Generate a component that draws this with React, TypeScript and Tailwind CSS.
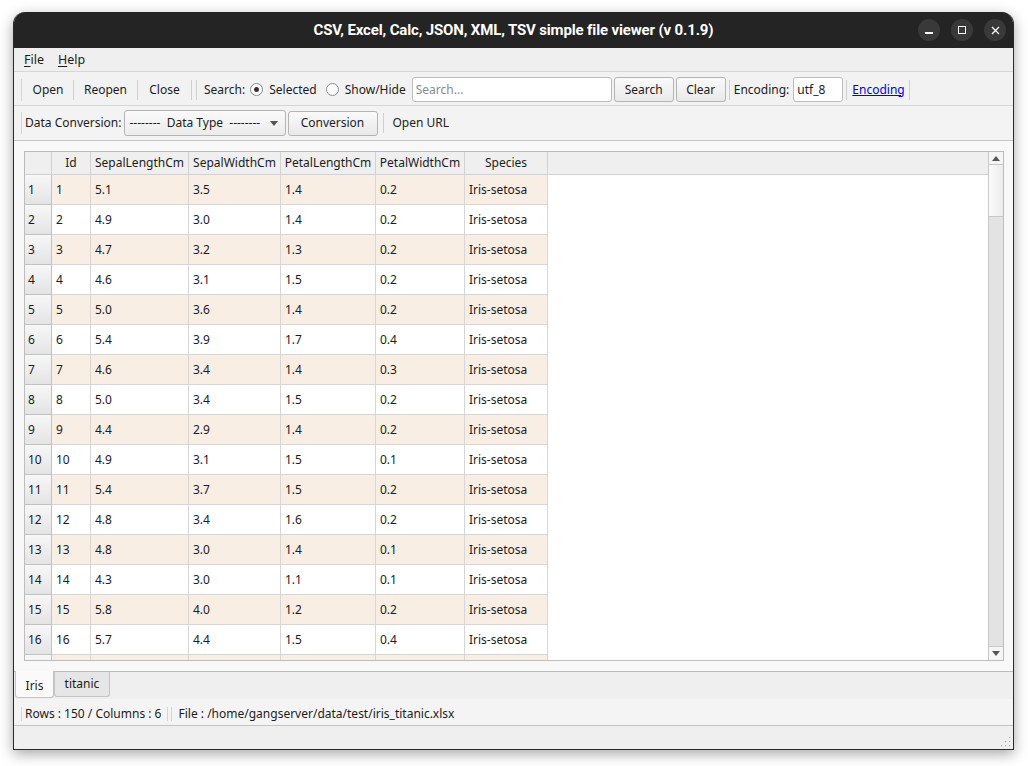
import React from 'react';

const rows: string[][] = [
  ['1', '5.1', '3.5', '1.4', '0.2'],
  ['2', '4.9', '3.0', '1.4', '0.2'],
  ['3', '4.7', '3.2', '1.3', '0.2'],
  ['4', '4.6', '3.1', '1.5', '0.2'],
  ['5', '5.0', '3.6', '1.4', '0.2'],
  ['6', '5.4', '3.9', '1.7', '0.4'],
  ['7', '4.6', '3.4', '1.4', '0.3'],
  ['8', '5.0', '3.4', '1.5', '0.2'],
  ['9', '4.4', '2.9', '1.4', '0.2'],
  ['10', '4.9', '3.1', '1.5', '0.1'],
  ['11', '5.4', '3.7', '1.5', '0.2'],
  ['12', '4.8', '3.4', '1.6', '0.2'],
  ['13', '4.8', '3.0', '1.4', '0.1'],
  ['14', '4.3', '3.0', '1.1', '0.1'],
  ['15', '5.8', '4.0', '1.2', '0.2'],
  ['16', '5.7', '4.4', '1.5', '0.4'],
  ['17', '5.4', '3.9', '1.3', '0.4'],
];

const columns = [
  { name: 'Id', w: 'w-[39px]' },
  { name: 'SepalLengthCm', w: 'w-[98px]' },
  { name: 'SepalWidthCm', w: 'w-[92px]' },
  { name: 'PetalLengthCm', w: 'w-[95px]' },
  { name: 'PetalWidthCm', w: 'w-[89px]' },
  { name: 'Species', w: 'w-[83px]' },
];

function Sep() {
  return <div className="h-[20px] w-px bg-[#cfcfcf] shrink-0" />;
}

function Handle() {
  return <div className="h-[22px] w-px bg-[#d4d4d4] shrink-0" />;
}

function PushButton({ label, w }: { label: string; w: string }) {
  return (
    <div
      className={`${w} h-[25px] shrink-0 flex items-center justify-center rounded-[3px] border border-[#b4b4b4] bg-gradient-to-b from-[#fafafa] to-[#e9e9e9]`}
    >
      {label}
    </div>
  );
}

function Radio({ checked }: { checked?: boolean }) {
  return (
    <div className="w-[13px] h-[13px] shrink-0 rounded-full border border-[#8a8a8a] bg-white flex items-center justify-center">
      {checked && <div className="w-[5px] h-[5px] rounded-full bg-[#333]" />}
    </div>
  );
}

export default function App() {
  return (
    <div
      className="w-[1028px] h-[766px] bg-white overflow-hidden pt-[12px] pl-[13px] text-[12px] text-[#1c1c1c]"
      style={{ fontFamily: '"Noto Sans", sans-serif' }}
    >
      <div className="w-[1001px] h-[738px] flex flex-col rounded-t-[12px] bg-[#efefef] border-x border-b border-[#2a2a2a] shadow-[0_4px_14px_rgba(0,0,0,0.35)] overflow-hidden">
        {/* Title bar */}
        <div className="h-[36px] shrink-0 bg-[#242424] relative flex items-center justify-center">
          <span
            className="text-white text-[15px] font-bold tracking-[-0.15px]"
            style={{ fontFamily: 'Roboto, "Noto Sans", sans-serif' }}
          >
            CSV, Excel, Calc, JSON, XML, TSV simple file viewer (v 0.1.9)
          </span>
          <div className="absolute right-[7px] top-[7px] flex gap-[11px]">
            <div className="w-[22px] h-[22px] rounded-full bg-[#393939] flex items-center justify-center">
              <div className="w-[8px] h-[1.5px] bg-white mt-[6px]" />
            </div>
            <div className="w-[22px] h-[22px] rounded-full bg-[#393939] flex items-center justify-center">
              <div className="w-[8px] h-[8px] border border-white" />
            </div>
            <div className="w-[22px] h-[22px] rounded-full bg-[#393939] flex items-center justify-center">
              <svg width="9" height="9" viewBox="0 0 9 9">
                <path d="M1 1L8 8M8 1L1 8" stroke="white" strokeWidth="1.3" />
              </svg>
            </div>
          </div>
        </div>

        {/* Menu bar */}
        <div className="h-[23px] shrink-0 flex items-center pl-[10px] pt-[2px] gap-[14px] text-[12.5px]">
          <span>
            <span className="underline underline-offset-2">F</span>ile
          </span>
          <span>
            <span className="underline underline-offset-2">H</span>elp
          </span>
        </div>

        {/* Toolbar 1 */}
        <div className="h-[35px] shrink-0 flex items-center border-y border-[#d6d6d6] bg-[#f2f2f2] pl-[7px] pt-[2px]">
          <Handle />
          <div className="w-[50px] text-center shrink-0 ml-[1px]">Open</div>
          <Sep />
          <div className="w-[63px] text-center shrink-0">Reopen</div>
          <Sep />
          <div className="w-[53px] text-center shrink-0">Close</div>
          <Sep />
          <div className="ml-[4px]"><Sep /></div>
          <span className="ml-[7px] shrink-0">Search:</span>
          <div className="ml-[5px]"><Radio checked /></div>
          <span className="ml-[6px] shrink-0">Selected</span>
          <div className="ml-[9px]"><Radio /></div>
          <span className="ml-[6px] shrink-0">Show/Hide</span>
          <div className="ml-[6px] w-[200px] h-[25px] shrink-0 rounded-[3px] border border-[#bdbdbd] bg-white flex items-center pl-[3px] text-[#8a8a8a]">
            Search...
          </div>
          <div className="ml-[2px]"><PushButton label="Search" w="w-[60px]" /></div>
          <div className="ml-[2px]"><PushButton label="Clear" w="w-[50px]" /></div>
          <div className="ml-[3px]"><Sep /></div>
          <span className="ml-[4px] shrink-0">Encoding:</span>
          <div className="ml-[4px] w-[50px] h-[25px] shrink-0 rounded-[3px] border border-[#bdbdbd] bg-white flex items-center pl-[3px]">
            utf_8
          </div>
          <div className="ml-[3px]"><Sep /></div>
          <span className="ml-[5px] shrink-0 text-[#0000ee] underline">Encoding</span>
          <div className="ml-[4px]"><Sep /></div>
        </div>

        {/* Toolbar 2 */}
        <div className="h-[35px] shrink-0 flex items-center border-b border-[#c4c4c4] bg-[#f3f3f3] pl-[7px]">
          <Handle />
          <span className="ml-[3px] shrink-0">Data Conversion:</span>
          <div className="ml-[2px] w-[162px] h-[26px] shrink-0 rounded-[3px] border border-[#b4b4b4] bg-gradient-to-b from-[#fafafa] to-[#ececec] flex items-center pl-[5px] pr-[7px]">
            <span className="flex-1 whitespace-pre">--------  Data Type  --------</span>
            <svg width="8" height="5" viewBox="0 0 8 5">
              <path d="M0 0H8L4 5Z" fill="#555" />
            </svg>
          </div>
          <div className="ml-[2px]"><PushButton label="Conversion" w="w-[90px]" /></div>
          <div className="ml-[5px]"><Sep /></div>
          <span className="ml-[9px] shrink-0">Open URL</span>
        </div>

        {/* Content pane */}
        <div className="h-[531px] shrink-0 bg-[#f8f8f8] border-b border-[#bcbcbc] pt-[10px] pl-[10px]">
          <div className="w-[980px] h-[510px] border border-[#bdbdbd] bg-white flex">
            <div className="w-[963px] flex flex-col overflow-hidden">
              {/* Header */}
              <div className="h-[23px] shrink-0 flex bg-[#efefef] border-b border-[#d2d2d2]">
                <div className="w-[27px] shrink-0 border-r border-[#d2d2d2]" />
                {columns.map((c) => (
                  <div
                    key={c.name}
                    className={`${c.w} shrink-0 border-r border-[#d2d2d2] flex items-center justify-center`}
                  >
                    {c.name}
                  </div>
                ))}
              </div>
              {/* Body */}
              <div className="flex-1 overflow-hidden">
                {rows.map((r, i) => (
                  <div key={r[0]} className="h-[30px] flex">
                    <div className="w-[27px] shrink-0 border-r border-b border-[#c2c2c2] bg-gradient-to-b from-[#f7f7f7] to-[#e4e4e4] flex items-center pl-[3px]">
                      {i + 1}
                    </div>
                    {[...r, 'Iris-setosa'].map((v, j) => (
                      <div
                        key={j}
                        className={`${columns[j].w} shrink-0 border-r border-b border-[#d6d6d6] flex items-center pl-[4px] ${
                          i % 2 === 0 ? 'bg-[#f9eee4]' : 'bg-white'
                        }`}
                      >
                        {v}
                      </div>
                    ))}
                  </div>
                ))}
              </div>
            </div>
            {/* Vertical scrollbar */}
            <div className="w-[15px] shrink-0 flex flex-col border-l border-[#c8c8c8] bg-[#e3e3e3]">
              <div className="h-[13px] shrink-0 bg-[#f5f5f5] border-b border-[#c8c8c8] flex items-center justify-center">
                <svg width="8" height="5" viewBox="0 0 8 5">
                  <path d="M0 5H8L4 0Z" fill="#555" />
                </svg>
              </div>
              <div className="h-[52px] shrink-0 bg-gradient-to-r from-[#fbfbfb] to-[#ececec] border-b border-[#c8c8c8]" />
              <div className="flex-1" />
              <div className="h-[14px] shrink-0 bg-[#f5f5f5] border-t border-[#c8c8c8] flex items-center justify-center">
                <svg width="8" height="5" viewBox="0 0 8 5">
                  <path d="M0 0H8L4 5Z" fill="#555" />
                </svg>
              </div>
            </div>
          </div>
        </div>

        {/* Tabs */}
        <div className="h-[27px] shrink-0 flex items-start pl-[1px]">
          <div className="w-[39px] h-[27px] -mt-px bg-[#fafafa] border-x border-b border-[#c4c4c4] rounded-b-[3px] flex items-center justify-center pt-[4px]">
            Iris
          </div>
          <div className="w-[56px] h-[25px] bg-[#e6e6e6] border-x border-b border-[#c4c4c4] rounded-b-[3px] flex items-center justify-center">
            titanic
          </div>
        </div>

        {/* Status bar */}
        <div className="h-[27px] shrink-0 flex items-center bg-[#f4f4f4] border-b border-[#c4c4c4] pl-[7px] pt-[3px]">
          <div className="h-[14px] w-px bg-[#d4d4d4]" />
          <span className="ml-[3px]">Rows : 150 / Columns : 6</span>
          <div className="ml-[6px] h-[14px] w-px bg-[#d4d4d4]" />
          <div className="ml-[3px] h-[14px] w-px bg-[#d4d4d4]" />
          <span className="ml-[6px]">File : /home/gangserver/data/test/iris_titanic.xlsx</span>
        </div>

        {/* Bottom strip */}
        <div className="flex-1 relative">
          <svg className="absolute right-[2px] bottom-[2px]" width="11" height="11" viewBox="0 0 11 11">
            {[
              [9, 1],
              [9, 5],
              [5, 5],
              [9, 9],
              [5, 9],
              [1, 9],
            ].map(([x, y], k) => (
              <rect key={k} x={x} y={y} width="1.2" height="1.2" fill="#b0b0b0" />
            ))}
          </svg>
        </div>
      </div>
    </div>
  );
}
